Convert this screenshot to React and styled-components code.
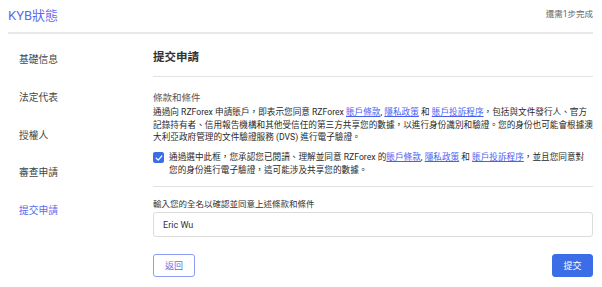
import React from "react";
import styled, { createGlobalStyle } from "styled-components";

const GlobalStyle = createGlobalStyle`
  html, body {
    margin: 0;
    padding: 0;
    background: #fff;
    font-family: Roboto, "Noto Sans CJK TC", sans-serif;
  }
`;

const steps = ["基礎信息", "法定代表", "授權人", "審查申請", "提交申請"];

const App = () => {
  return (
    <Page>
      <GlobalStyle />
      <Header>
        <HeaderTitle>KYB狀態</HeaderTitle>
        <HeaderHint>還需1步完成</HeaderHint>
      </Header>
      <Body>
        <Sidebar>
          {steps.map((s, i) => (
            <StepItem key={s} active={i === steps.length - 1}>
              {s}
            </StepItem>
          ))}
        </Sidebar>
        <Main>
          <Title>提交申請</Title>
          <Terms>
            <SubTitle>條款和條件</SubTitle>
            <Paragraph>
              {"通過向 RZForex 申請賬戶，即表示您同意 RZForex "}
              <Link>賬戶條款</Link>
              {", "}
              <Link>隱私政策</Link>
              {" 和 "}
              <Link>賬戶投訴程序</Link>
              {"，包括與文件發行人、官方"}
              <br />
              {"記錄持有者、信用報告機構和其他受信任的第三方共享您的數據，以進行身份識別和驗證。您的身份也可能會根據澳"}
              <br />
              {"大利亞政府管理的文件驗證服務 (DVS) 進行電子驗證。"}
            </Paragraph>
            <CheckRow>
              <CheckBox>
                <svg width="8" height="8" viewBox="0 0 10 10">
                  <polyline
                    points="1.5,5.2 4,7.6 8.6,2.4"
                    fill="none"
                    stroke="#fff"
                    strokeWidth="1.6"
                    strokeLinecap="round"
                    strokeLinejoin="round"
                  />
                </svg>
              </CheckBox>
              <Paragraph>
                {"通過選中此框，您承認您已閱讀、理解並同意 RZForex 的"}
                <Link>賬戶條款</Link>
                {", "}
                <Link>隱私政策</Link>
                {" 和 "}
                <Link>賬戶投訴程序</Link>
                {"，並且您同意對"}
                <br />
                {"您的身份進行電子驗證，這可能涉及共享您的數據。"}
              </Paragraph>
            </CheckRow>
          </Terms>
          <FieldLabel>輸入您的全名以確認並同意上述條款和條件</FieldLabel>
          <NameInput defaultValue="Eric Wu" />
          <Actions>
            <Button variant="outline">返回</Button>
            <Button variant="primary">提交</Button>
          </Actions>
        </Main>
      </Body>
    </Page>
  );
};

export default App;

const Page = styled.div`
  width: 602px;
  height: 287px;
  overflow: hidden;
  color: #333;
`;

const Header = styled.div`
  display: flex;
  align-items: center;
  justify-content: space-between;
  height: 32px;
  margin: 0 9px 0 8px;
  border-bottom: 2px solid #e8e8e8;
`;

const HeaderTitle = styled.div`
  font-size: 13px;
  line-height: 16px;
  color: #5b6cf0;
`;

const HeaderHint = styled.div`
  font-size: 8.5px;
  line-height: 12px;
  color: #666;
  margin-top: -4px;
`;

const Body = styled.div`
  display: flex;
`;

const Sidebar = styled.div`
  width: 137px;
  padding: 19px 0 0 19px;
  display: flex;
  flex-direction: column;
  gap: 24.8px;
`;

const StepItem = styled.div`
  font-size: 9.75px;
  line-height: 13px;
  color: ${(props) => (props.active ? "#5b6cf0" : "#444")};
`;

const Main = styled.div`
  flex: 1;
  padding: 15px 9px 0 0;
  display: flex;
  flex-direction: column;
`;

const Title = styled.div`
  font-size: 11.5px;
  line-height: 16px;
  font-weight: 700;
  color: #333;
  padding-bottom: 11px;
  border-bottom: 1px solid #e2e2e2;
`;

const Terms = styled.div`
  padding: 14px 0 10px;
  border-bottom: 1px solid #e2e2e2;
`;

const SubTitle = styled.div`
  font-size: 9.5px;
  line-height: 13px;
  color: #555;
  margin-bottom: 2px;
`;

const Paragraph = styled.div`
  font-size: 8.65px;
  line-height: 12.6px;
  color: #2a2a2a;
  white-space: nowrap;
`;

const Link = styled.a`
  color: #4a5ff0;
  text-decoration: underline;
  cursor: pointer;
`;

const CheckRow = styled.div`
  display: flex;
  align-items: flex-start;
  gap: 5px;
  margin-top: 7.5px;
`;

const CheckBox = styled.div`
  flex: none;
  width: 11px;
  height: 11px;
  margin-top: 1px;
  border-radius: 2px;
  background: #3b6de6;
  display: flex;
  align-items: center;
  justify-content: center;
`;

const FieldLabel = styled.div`
  font-size: 8.5px;
  line-height: 12px;
  color: #333;
  margin-top: 11px;
`;

const NameInput = styled.input`
  box-sizing: border-box;
  height: 25px;
  margin-top: 2px;
  padding: 0 9px;
  border: 1px solid #dcdcdc;
  border-radius: 3px;
  font-family: Roboto, "Noto Sans CJK TC", sans-serif;
  font-size: 9px;
  color: #333;
  outline: none;
`;

const Actions = styled.div`
  display: flex;
  justify-content: space-between;
  margin-top: 17px;
`;

const Button = styled.button`
  box-sizing: border-box;
  height: 23px;
  width: ${(props) => (props.variant === "primary" ? "41px" : "42px")};
  border-radius: 3px;
  font-family: Roboto, "Noto Sans CJK TC", sans-serif;
  font-size: 9px;
  cursor: pointer;
  border: 1px solid
    ${(props) => (props.variant === "primary" ? "#3b6de6" : "#8d9cf4")};
  background: ${(props) => (props.variant === "primary" ? "#3b6de6" : "#fff")};
  color: ${(props) => (props.variant === "primary" ? "#fff" : "#5b6cf0")};
`;
